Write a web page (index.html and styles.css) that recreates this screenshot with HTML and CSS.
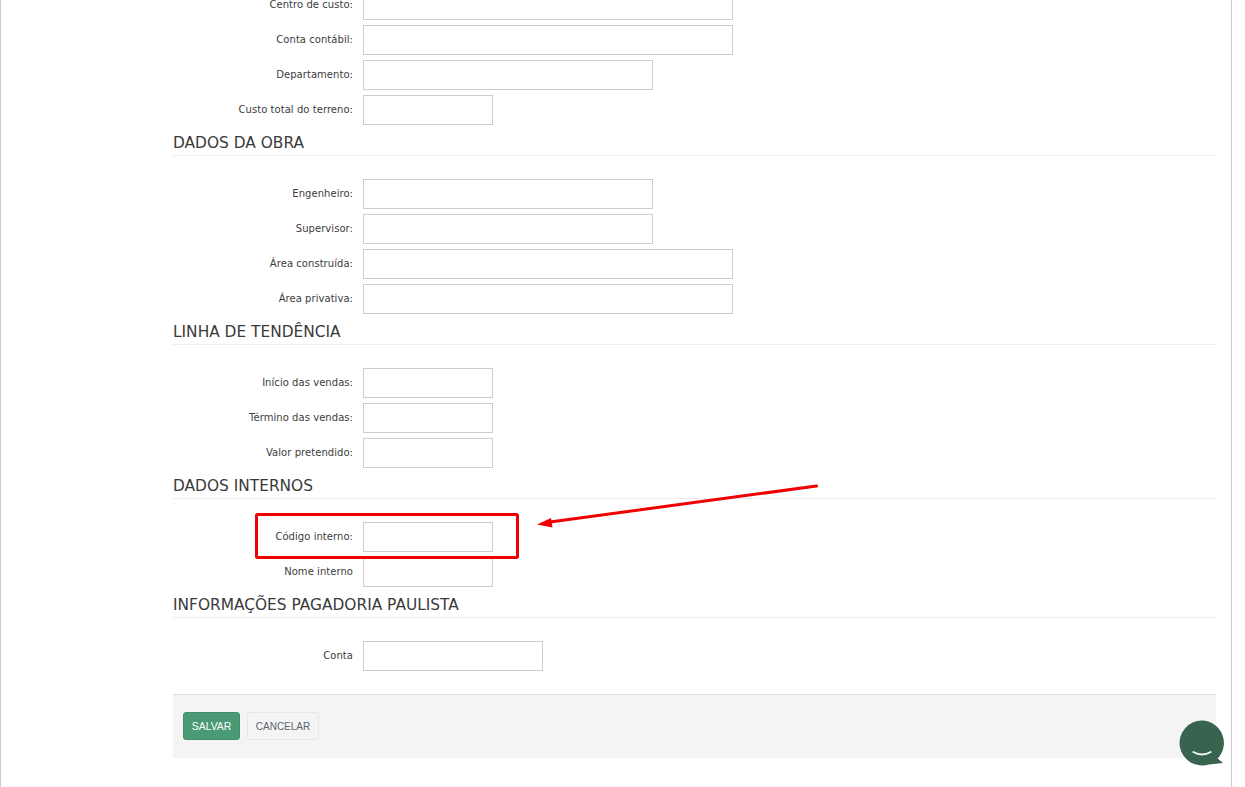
FILE: index.html
```html
<!DOCTYPE html>
<html lang="pt-BR">
<head>
<meta charset="utf-8">
<title>Dados da obra</title>
<link rel="stylesheet" href="styles.css">
</head>
<body>
<div class="page">
  <main class="form">
    <div class="row"><label>Centro de custo:</label><input class="w370"></div>
    <div class="row"><label>Conta contábil:</label><input class="w370"></div>
    <div class="row"><label>Departamento:</label><input class="w290"></div>
    <div class="row"><label>Custo total do terreno:</label><input class="w130"></div>

    <h3>DADOS DA OBRA</h3>
    <div class="row"><label>Engenheiro:</label><input class="w290"></div>
    <div class="row"><label>Supervisor:</label><input class="w290"></div>
    <div class="row"><label>Área construída:</label><input class="w370"></div>
    <div class="row"><label>Área privativa:</label><input class="w370"></div>

    <h3>LINHA DE TENDÊNCIA</h3>
    <div class="row"><label>Início das vendas:</label><input class="w130"></div>
    <div class="row"><label>Término das vendas:</label><input class="w130"></div>
    <div class="row"><label>Valor pretendido:</label><input class="w130"></div>

    <h3>DADOS INTERNOS</h3>
    <div class="row"><label>Código interno:</label><input class="w130"></div>
    <div class="row"><label>Nome interno</label><input class="w130"></div>

    <h3>INFORMAÇÕES PAGADORIA PAULISTA</h3>
    <div class="row"><label>Conta</label><input class="w180"></div>

    <div class="actions">
      <button class="btn save" type="button">SALVAR</button>
      <button class="btn cancel" type="button">CANCELAR</button>
    </div>
  </main>
</div>

<svg class="markup" width="1245" height="787" viewBox="0 0 1245 787" aria-hidden="true">
  <rect x="256.5" y="514.5" width="261" height="43" rx="1" fill="none" stroke="#f00000" stroke-width="3"/>
  <path d="M816.5 486 L550 522" fill="none" stroke="#f00000" stroke-width="3" stroke-linecap="round"/>
  <path d="M537 524.5 L551 518 L552.5 527.5 Z" fill="#f00000"/>
</svg>

<svg class="chat" width="50" height="50" viewBox="0 0 50 50" aria-hidden="true">
  <path d="M24 1.5 A22.5 22.5 0 1 0 31 45.4 L45 44 L39.7 39.5 A22.5 22.5 0 0 0 24 1.5 Z" fill="#38634f"/>
  <path d="M15.3 33 Q24 38 32.7 33" fill="none" stroke="#f4f4f4" stroke-width="1.8" stroke-linecap="round"/>
</svg>
</body>
</html>
```
FILE: styles.css
```css
* { box-sizing: border-box; }
html, body { margin: 0; height: 787px; overflow: hidden; background: #fff; }
body { font-family: "DejaVu Sans", Verdana, sans-serif; color: #333; }

.page {
  width: 1232px;
  height: 787px;
  overflow: hidden;
  border-left: 1px solid #ccc;
  border-right: 1px solid #ccc;
}

.form {
  margin: -10px 0 0 172px;
  width: 1043px;
}

.row {
  display: flex;
  align-items: center;
  gap: 10px;
  height: 30px;
  margin-bottom: 5px;
}

.row label {
  width: 180px;
  text-align: right;
  font-size: 10px;
  letter-spacing: 0.05px;
  line-height: 14px;
  color: #3c3c3c;
}

.row input {
  height: 30px;
  padding: 0 8px;
  border: 1px solid #ccc;
  background: #fff;
  border-radius: 0;
}

.w130 { width: 130px; }
.w180 { width: 180px; }
.w290 { width: 290px; }
.w370 { width: 370px; }

h3 {
  margin: 0 0 23px;
  height: 26px;
  font-size: 15.4px;
  font-weight: 400;
  line-height: 27px;
  color: #3a3a3a;
  border-bottom: 1px solid #eee;
}

.actions {
  display: flex;
  gap: 7px;
  margin-top: 23px;
  height: 64px;
  padding: 17px 10px 0;
  background: #f4f4f4;
  border-top: 1px solid #ddd;
}

.btn {
  height: 28px;
  border-radius: 3px;
  font-family: "Liberation Sans", Arial, sans-serif;
}

.save {
  width: 57px;
  padding: 0;
  font-size: 10.4px;
  border: 1px solid #438f6b;
  background: #4a9a75;
  color: #fff;
}

.cancel {
  width: 72px;
  padding: 0;
  font-size: 10px;
  border: 1px solid #e6e6e6;
  background: #f4f4f4;
  color: #5c6470;
}

.markup { position: absolute; left: 0; top: 0; pointer-events: none; }
.chat { position: absolute; left: 1178px; top: 719px; }
```
